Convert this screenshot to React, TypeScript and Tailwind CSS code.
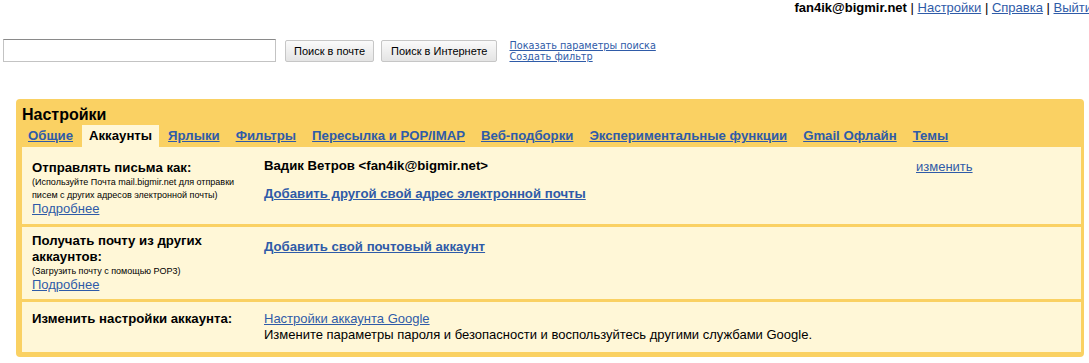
// Настройки почты — вкладка «Аккаунты»
const tabs = [
  'Общие',
  'Аккаунты',
  'Ярлыки',
  'Фильтры',
  'Пересылка и POP/IMAP',
  'Веб-подборки',
  'Экспериментальные функции',
  'Gmail Офлайн',
  'Темы',
];

const linkCls = 'text-[#2f5ba8] underline';

export default function App() {
  return (
    <div className="w-[1089px] h-[363px] overflow-hidden bg-white text-[13px] text-black font-['Liberation_Sans',Arial,sans-serif]">
      {/* верхняя строка пользователя */}
      <div className="w-[1092px] text-right leading-[15px] whitespace-nowrap">
        <b>fan4ik@bigmir.net</b> | <a className={linkCls}>Настройки</a> |{' '}
        <a className={linkCls}>Справка</a> | <a className={linkCls}>Выйти</a>
      </div>

      {/* поиск */}
      <div className="mt-[24px] flex items-start">
        <input
          className="ml-[3px] w-[273px] h-[23px] border border-[#c3c3c3] border-t-[#8a8a8a] outline-none"
          type="text"
        />
        <button className="ml-[9px] mt-[1px] h-[22px] px-[8px] text-[11px] rounded-[2px] border border-[#c6c6c6] bg-gradient-to-b from-[#fafafa] to-[#e4e4e4]">
          Поиск в почте
        </button>
        <button className="ml-[7px] mt-[1px] h-[22px] px-[9px] text-[11px] rounded-[2px] border border-[#c6c6c6] bg-gradient-to-b from-[#fafafa] to-[#e4e4e4]">
          Поиск в Интернете
        </button>
        <div className="ml-[12px] mt-[1px] flex flex-col font-['DejaVu_Sans',Verdana,sans-serif] text-[9.7px] leading-[11px]">
          <a className={linkCls}>Показать параметры поиска</a>
          <a className={linkCls}>Создать фильтр</a>
        </div>
      </div>

      {/* панель настроек */}
      <div className="mt-[37px] ml-[16px] w-[1068px] rounded-[4px] bg-[#fad163] pl-[6px] pr-[3px] pb-[5px]">
        <div className="h-[26px] pt-[6px] text-[16px] font-bold leading-[19px]">Настройки</div>
        <div className="flex -ml-[1px] gap-[2px] h-[22px] text-[13.2px]">
          {tabs.map((t) => (
            <span
              key={t}
              className={
                t === 'Аккаунты'
                  ? 'px-[7px] leading-[22px] font-bold bg-[#fff7d7]'
                  : 'px-[7px] leading-[22px] font-bold text-[#2f5ba8] underline'
              }
            >
              {t}
            </span>
          ))}
        </div>

        <div className="bg-[#fff7d7]">
          {/* отправлять письма как */}
          <div className="flex border-b-[3px] border-[#fad163]">
            <div className="w-[242px] shrink-0 pl-[10px] pr-[8px] pt-[13px] pb-[8px]">
              <div className="font-bold text-[13.2px] leading-[16px]">Отправлять письма как:</div>
              <div className="text-[9px] leading-[13px]">
                (Используйте Почта mail.bigmir.net для отправки писем с других адресов электронной почты)
              </div>
              <div className="leading-[14px]">
                <a className={linkCls}>Подробнее</a>
              </div>
            </div>
            <div className="flex-1 pt-[11px] text-[13.2px]">
              <div className="font-bold leading-[16px]">Вадик Ветров &lt;fan4ik@bigmir.net&gt;</div>
              <div className="mt-[12px] font-bold leading-[16px]">
                <a className={linkCls}>Добавить другой свой адрес электронной почты</a>
              </div>
            </div>
            <div className="w-[165px] shrink-0 pt-[12px] leading-[16px]">
              <a className={linkCls}>изменить</a>
            </div>
          </div>

          {/* получать почту */}
          <div className="flex border-b-[3px] border-[#fad163]">
            <div className="w-[242px] shrink-0 pl-[10px] pr-[8px] pt-[6px] pb-[7px]">
              <div className="font-bold text-[13.2px] leading-[16px]">Получать почту из других аккаунтов:</div>
              <div className="text-[9px] leading-[13px]">(Загрузить почту с помощью POP3)</div>
              <div className="leading-[14px]">
                <a className={linkCls}>Подробнее</a>
              </div>
            </div>
            <div className="flex-1 pt-[12px] font-bold text-[13.2px] leading-[16px]">
              <a className={linkCls}>Добавить свой почтовый аккаунт</a>
            </div>
          </div>

          {/* настройки аккаунта */}
          <div className="flex">
            <div className="w-[242px] shrink-0 pl-[10px] pr-[8px] pt-[9px] pb-[9px]">
              <div className="font-bold text-[13.2px] leading-[16px]">Изменить настройки аккаунта:</div>
            </div>
            <div className="flex-1 pt-[9px] pb-[9px] leading-[16px]">
              <div>
                <a className={linkCls}>Настройки аккаунта Google</a>
              </div>
              <div>Измените параметры пароля и безопасности и воспользуйтесь другими службами Google.</div>
            </div>
          </div>
        </div>
      </div>
    </div>
  );
}
